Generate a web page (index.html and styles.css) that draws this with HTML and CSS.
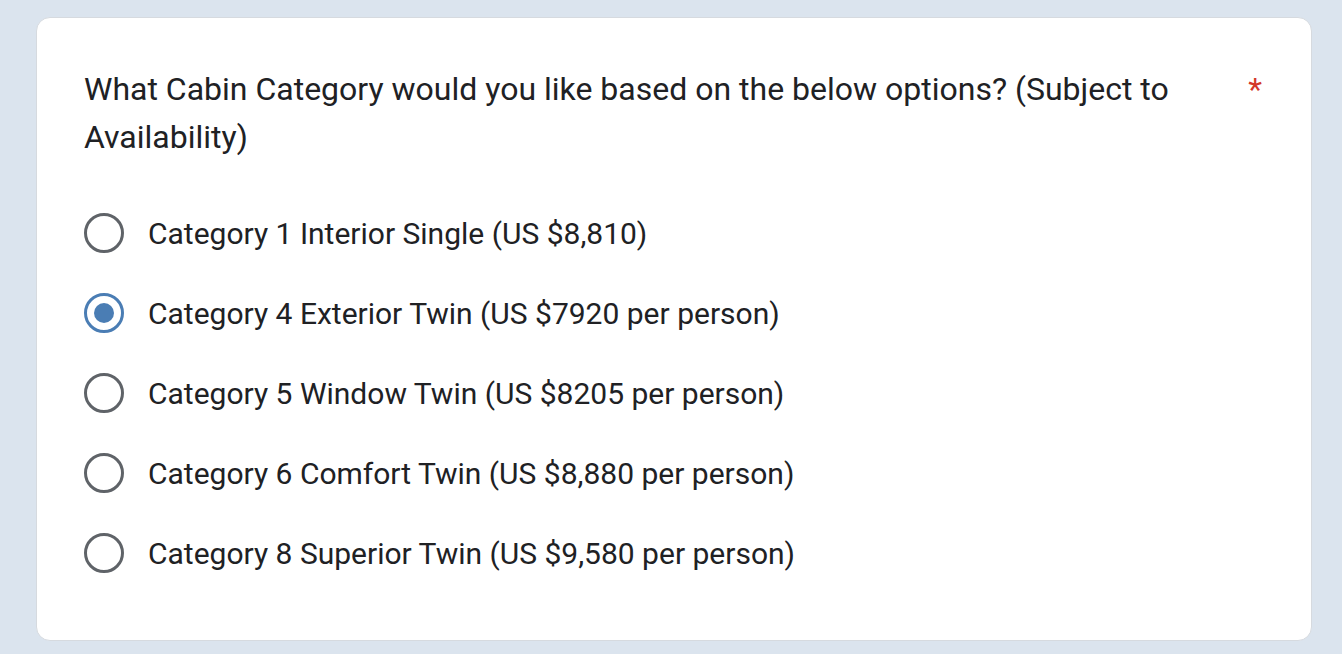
FILE: index.html
```html
<!DOCTYPE html>
<html lang="en">
<head>
  <meta charset="UTF-8">
  <meta name="viewport" content="width=device-width, initial-scale=1.0">
  <title>Cabin Category</title>
  <link rel="stylesheet" href="styles.css">
</head>
<body>
  <div class="question-card">
    <!-- Soru başlığı -->
    <div class="question-header">
      <div class="question-title">What Cabin Category would you like based on the below options? (Subject to Availability)</div>
      <span class="required">*</span>
    </div>

    <!-- Seçenekler -->
    <div class="options">
      <label class="option">
        <span class="radio"></span>
        <span class="option-text">Category 1 Interior Single (US $8,810)</span>
      </label>
      <label class="option">
        <span class="radio checked"></span>
        <span class="option-text">Category 4 Exterior Twin (US $7920 per person)</span>
      </label>
      <label class="option">
        <span class="radio"></span>
        <span class="option-text">Category 5 Window Twin (US $8205 per person)</span>
      </label>
      <label class="option">
        <span class="radio"></span>
        <span class="option-text">Category 6 Comfort Twin (US $8,880 per person)</span>
      </label>
      <label class="option">
        <span class="radio"></span>
        <span class="option-text">Category 8 Superior Twin (US $9,580 per person)</span>
      </label>
    </div>
  </div>
</body>
</html>
```

FILE: styles.css
```css
body {
  font-family: 'Roboto', 'Liberation Sans', sans-serif;
  background: #dbe4ee;
  color: #202124;
  margin: 0;
  padding: 17px 0 0 36px;
}

/* Kart */
.question-card {
  box-sizing: border-box;
  width: 1276px;
  height: 624px;
  background-color: #fff;
  border: 1px solid #d6dadf;
  border-radius: 14px;
  padding: 47px;
}

.question-header {
  display: flex;
  align-items: flex-start;
}

.question-title {
  flex: 1;
  font-size: 32px;
  line-height: 48px;
  padding-right: 40px;
}

.required {
  color: #d3382a;
  font-size: 32px;
  line-height: 48px;
  padding-right: 2px;
}

/* Seçenekler */
.options {
  margin-top: 32px;
  display: flex;
  flex-direction: column;
}

.option {
  display: flex;
  align-items: center;
  height: 80px;
}

.radio {
  box-sizing: border-box;
  width: 40px;
  height: 40px;
  border: 3px solid #5f6368;
  border-radius: 50%;
  margin-right: 24px;
  display: flex;
  justify-content: center;
  align-items: center;
  flex-shrink: 0;
}

.radio.checked {
  border-color: #4a7db4;
}

.radio.checked::after {
  content: "";
  width: 20px;
  height: 20px;
  border-radius: 50%;
  background-color: #4a7db4;
}

.option-text {
  font-size: 30px;
}
```
